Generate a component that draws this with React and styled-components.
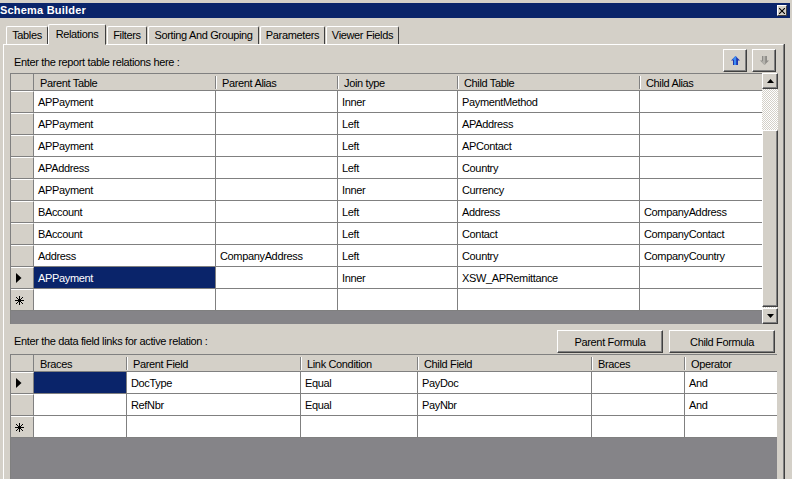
import React from "react";
import styled, { createGlobalStyle, css } from "styled-components";

const Global = createGlobalStyle`
  html, body { margin: 0; padding: 0; background: #d4d0c8; overflow: hidden; }
  * { box-sizing: border-box; }
`;

const Window = styled.div`
  width: 792px; height: 479px; overflow: hidden; background: #d4d0c8;
  padding-top: 3px;
  font: 11px/14px "Liberation Sans", Arial, sans-serif; letter-spacing: -0.35px; color: #000;
  display: flex; flex-direction: column;
`;
const TitleBar = styled.div`
  height: 15px; width: 790px; background: #0a246a; color: #fff; font-weight: bold;
  font-size: 11px; letter-spacing: 0.2px; line-height: 15px; display: flex; justify-content: space-between; align-items: center;
  padding-right: 3px; flex: none;
`;
const CloseBtn = styled.div`
  width: 10px; height: 11px; background: #d4d0c8; border: 1px solid; border-color: #fff #404040 #404040 #fff;
  display: flex; align-items: center; justify-content: center;
`;
const TabStrip = styled.div`
  display: flex; gap: 1px; height: 26px; padding: 6px 0 0 6px; flex: none; align-items: flex-end;
`;
const Tab = styled.div`
  width: ${p => p.$w}px; height: 18px; line-height: 17px; text-align: center;
  background: #d4d0c8; border: 1px solid; border-bottom: 0;
  border-color: #fff #404040 #fff #fff; border-radius: 2px 2px 0 0;
  white-space: nowrap;
  ${p => p.$active && css`
    height: 21px; line-height: 18px; margin: 0 0 -1px -1px; position: relative; z-index: 2;
    border-bottom: 1px solid #d4d0c8;
  `}
`;
const Pane = styled.div`
  margin-left: 3px; width: 781px; height: 440px; flex: none;
  border: 1px solid; border-color: #fff #808080 transparent #fff;
  box-shadow: 1px 0 0 #404040;
  padding: 4px 0 0 6px; display: flex; flex-direction: column;
`;
const TopLine = styled.div`
  height: 24px; display: flex; justify-content: space-between; align-items: flex-start; padding-right: 7px; flex: none;
`;
const Label = styled.div`
  padding-top: ${p => p.$pt}px; padding-left: 4px; align-self: flex-start;
`;
const IconButtons = styled.div`display: flex; gap: 5px;`;
const Raised = styled.div`
  background: #d4d0c8; border: 1px solid; border-color: #fff #404040 #404040 #fff;
  box-shadow: inset -1px -1px 0 #808080;
  display: flex; align-items: center; justify-content: center;
`;
const IconBtn = styled(Raised)`width: 24px; height: 23px;`;
const FormulaBtn = styled(Raised)`width: 106px; height: 23px;`;

const GridFrame = styled.div`
  width: ${p => p.$w}px; flex: none; height: ${p => p.$h}px; background: #858488;
  border-top: 1px solid #808080; border-left: 1px solid #808080; overflow: hidden;
`;
const Row = styled.div`
  display: grid; grid-template-columns: ${p => p.$cols}; height: 22px;
`;
const HeadRow = styled(Row)`height: 17px; background: #d4d0c8; border-bottom: 1px solid #808080;`;
const Corner = styled.div`border-right: 1px solid #808080;`;
const HeadCell = styled.div`
  position: relative; padding-left: 6px; line-height: 18px; white-space: nowrap; height: 16px;
`;
const HeadDivider = styled.span`
  position: absolute; right: -1px; top: 2px; bottom: 1px; width: 2px;
  border-left: 1px solid #808080; border-right: 1px solid #fff;
`;
const RowHead = styled.div`
  background: #d4d0c8; border-top: 1px solid #fff; margin-left: 0;
  border-right: 1px solid #808080; border-bottom: 1px solid #808080;
  display: flex; align-items: center; justify-content: center; padding-right: 6px;
`;
const Cell = styled.div`
  background: ${p => p.$sel ? "#0a246a" : "#fff"}; color: ${p => p.$sel ? "#fff" : "#000"};
  border-right: 1px solid #808080; border-bottom: 1px solid #808080;
  padding: 1px 0 0 4px; line-height: 21px; white-space: nowrap; overflow: hidden;
  &:last-child { border-right: 0; }
`;
const TopGridWrap = styled.div`display: flex; flex: none;`;
const ScrollBar = styled.div`
  width: 16px; height: 251px; display: flex; flex-direction: column;
  background: repeating-conic-gradient(#d4d0c8 0 25%, #fff 0 50%) 0 0 / 2px 2px;
`;
const ScrollBtn = styled(Raised)`width: 16px; height: 16px; flex: none;`;
const Thumb = styled(Raised)`width: 16px; flex: 1; margin: 41px 0 1px;`;
const MidLine = styled.div`
  height: 30px; display: flex; justify-content: space-between; align-items: flex-end; flex: none;
  width: 767px; padding: 0 2px 1px 0;
`;
const FormulaBtns = styled.div`display: flex; gap: 6px;`;

const Arrow = ({ down }) => (
  <svg width="7" height="4" viewBox="0 0 7 4">
    <path d={down ? "M0 0h7L3.5 4z" : "M3.5 0L7 4H0z"} fill="#000" />
  </svg>
);
const Pointer = () => (
  <svg width="6" height="10" viewBox="0 0 6 10"><path d="M0 0l5.5 5L0 10z" fill="#000" /></svg>
);
const Star = () => (
  <svg width="9" height="9" viewBox="0 0 9 9" stroke="#000" strokeWidth="1" shapeRendering="crispEdges">
    <path d="M4.5 0v9M0 4.5h9M1 1l7 7M8 1l-7 7" />
  </svg>
);
const MoveIcon = ({ down, on }) => (
  <svg width="9" height="9" viewBox="0 0 9 9" style={down ? { transform: "scaleY(-1)" } : undefined}>
    <path d="M4.5 0L9 4.5H7V9H2V4.5H0z" fill={on ? "#1f36b0" : "#8e8c88"} />
    <path d="M4.5 0L1.2 3.8H3V9h2.2V0z" fill={on ? "#3f8cf2" : "#b4b2ac"} />
  </svg>
);

const topCols = "23px 182px 122px 120px 182px 122px";
const botCols = "23px 93px 174px 117px 174px 93px 92px";
const topHead = ["Parent Table", "Parent Alias", "Join type", "Child Table", "Child Alias"];
const botHead = ["Braces", "Parent Field", "Link Condition", "Child Field", "Braces", "Operator"];
const topRows = [
  ["APPayment", "", "Inner", "PaymentMethod", ""],
  ["APPayment", "", "Left", "APAddress", ""],
  ["APPayment", "", "Left", "APContact", ""],
  ["APAddress", "", "Left", "Country", ""],
  ["APPayment", "", "Inner", "Currency", ""],
  ["BAccount", "", "Left", "Address", "CompanyAddress"],
  ["BAccount", "", "Left", "Contact", "CompanyContact"],
  ["Address", "CompanyAddress", "Left", "Country", "CompanyCountry"],
  ["APPayment", "", "Inner", "XSW_APRemittance", ""],
  ["", "", "", "", ""],
];
const botRows = [
  ["", "DocType", "Equal", "PayDoc", "", "And"],
  ["", "RefNbr", "Equal", "PayNbr", "", "And"],
  ["", "", "", "", "", ""],
];

const DataGrid = ({ cols, head, rows, active, w, h }) => (
  <GridFrame $w={w} $h={h}>
    <HeadRow $cols={cols}>
      <Corner />
      {head.map((t, i) => (
        <HeadCell key={i}>
          {t}
          {i < head.length - 1 && <HeadDivider />}
        </HeadCell>
      ))}
    </HeadRow>
    {rows.map((r, i) => (
      <Row key={i} $cols={cols}>
        <RowHead>{i === active ? <Pointer /> : i === rows.length - 1 ? <Star /> : null}</RowHead>
        {r.map((c, j) => <Cell key={j} $sel={i === active && j === 0}>{c}</Cell>)}
      </Row>
    ))}
  </GridFrame>
);

export default function App() {
  return (
    <Window>
      <Global />
      <TitleBar>
        <span>Schema Builder</span>
        <CloseBtn>
          <svg width="6" height="6" viewBox="0 0 6 6" stroke="#000" strokeWidth="1.1"><path d="M0 0l6 6M6 0L0 6" /></svg>
        </CloseBtn>
      </TitleBar>
      <TabStrip>
        <Tab $w={42}>Tables</Tab>
        <Tab $w={58} $active>Relations</Tab>
        <Tab $w={40}>Filters</Tab>
        <Tab $w={111}>Sorting And Grouping</Tab>
        <Tab $w={65}>Parameters</Tab>
        <Tab $w={73}>Viewer Fields</Tab>
      </TabStrip>
      <Pane>
        <TopLine>
          <Label $pt={6}>Enter the report table relations here :</Label>
          <IconButtons>
            <IconBtn><MoveIcon on /></IconBtn>
            <IconBtn><MoveIcon down /></IconBtn>
          </IconButtons>
        </TopLine>
        <TopGridWrap>
          <DataGrid cols={topCols} head={topHead} rows={topRows} active={8} w={752} h={251} />
          <ScrollBar>
            <ScrollBtn><Arrow /></ScrollBtn>
            <Thumb />
            <ScrollBtn><Arrow down /></ScrollBtn>
          </ScrollBar>
        </TopGridWrap>
        <MidLine>
          <Label $pt={10}>Enter the data field links for active relation :</Label>
          <FormulaBtns>
            <FormulaBtn>Parent Formula</FormulaBtn>
            <FormulaBtn>Child Formula</FormulaBtn>
          </FormulaBtns>
        </MidLine>
        <DataGrid cols={botCols} head={botHead} rows={botRows} active={0} w={767} h={126} />
      </Pane>
    </Window>
  );
}
